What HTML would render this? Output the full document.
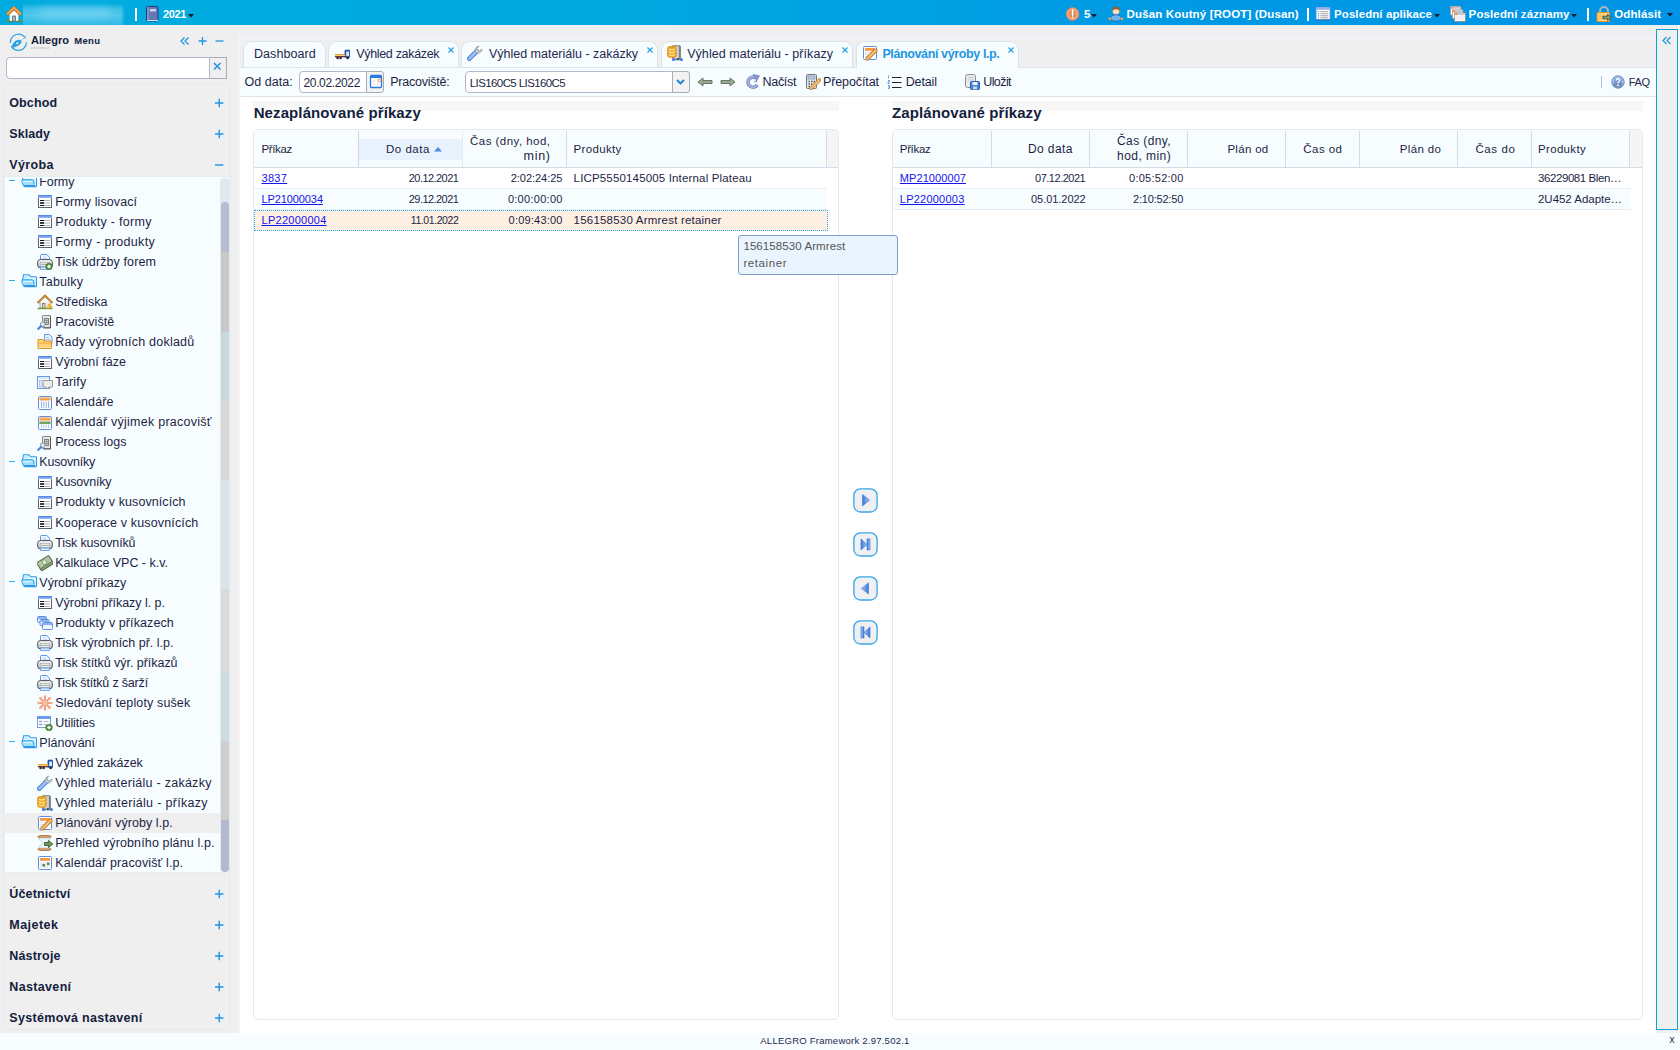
<!DOCTYPE html>
<html><head><meta charset="utf-8"><title>Allegro</title>
<style>
html,body{margin:0;padding:0;}
body{width:1680px;height:1050px;overflow:hidden;background:#efefef;font-family:"Liberation Sans",sans-serif;color:#1d1f45;position:relative;}
.b{position:absolute;box-sizing:border-box;}
.t{position:absolute;white-space:nowrap;line-height:1;}
.lk{color:#1414ec;text-decoration:underline;}
</style></head><body>
<svg width="0" height="0" style="position:absolute"><defs><linearGradient id="gp" x1="0" y1="0" x2="0" y2="1"><stop offset="0" stop-color="#fcfcfc"/><stop offset="1" stop-color="#b4b8be"/></linearGradient><linearGradient id="gb" x1="0" y1="0" x2="1" y2="0"><stop offset="0" stop-color="#3a78d8"/><stop offset="1" stop-color="#a8c8f4"/></linearGradient><linearGradient id="gbr" x1="1" y1="0" x2="0" y2="0"><stop offset="0" stop-color="#3a78d8"/><stop offset="1" stop-color="#a8c8f4"/></linearGradient><linearGradient id="gt" x1="0" y1="0" x2="0" y2="1"><stop offset="0" stop-color="#4a7ee0"/><stop offset="1" stop-color="#a4c2f6"/></linearGradient></defs></svg>

<div class="b" style="left:0px;top:0px;width:1680px;height:25px;background:linear-gradient(90deg,#00acdf 0%,#00a9e0 35%,#0099e4 70%,#0093e6 100%);"></div>
<svg class="b" style="left:6px;top:5.5px" width="16" height="16" viewBox="0 0 16 16"><path d="M3.600 8.200L8 4.200l4.400 4v6.900h-8.800z" fill="#fff"/>
<path d="M1 8.700L8 1.900l7 6.800" fill="none" stroke="#c8701c" stroke-width="3.400" stroke-linejoin="miter"/><path d="M1.200 8.300L8 1.700l6.800 6.600" fill="none" stroke="#f2a452" stroke-width="2.200" stroke-linejoin="miter"/>
<rect x="6.100" y="9.600" width="3.800" height="5.500" fill="#6e7670"/><rect x="7" y="10.600" width="2" height="4.500" fill="#b4b4bc"/>
<path d="M0.200 14.600h3.600M12.200 14.600h3.600" stroke="#8a9a38" stroke-width="1.600"/><path d="M0.200 15.300h15.600" stroke="#6a6a28" stroke-width=".700"/></svg>
<div class="b" style="left:0;top:0;width:240px;height:25px;overflow:hidden">
<div class="b" style="left:23px;top:0px;width:102px;height:25px;background:linear-gradient(180deg,rgba(120,212,242,0) 12%,rgba(120,212,242,.55) 38%,rgba(130,216,244,.62) 62%,rgba(100,204,238,.45) 100%);-webkit-mask-image:linear-gradient(90deg,#000 0,#000 96%,transparent 100%);"></div>
<div class="b" style="left:40px;top:8px;width:70px;height:10px;background:rgba(170,230,250,.35);filter:blur(4px);"></div>
</div>
<div class="b" style="left:135.3px;top:8px;width:1.8px;height:13px;background:#fff;"></div>
<svg class="b" style="left:143.5px;top:6px" width="16" height="16" viewBox="0 0 16 16"><rect x="2.500" y="0.500" width="11.500" height="14.500" rx="1" fill="#6478b8" stroke="#2c3a78" stroke-width="1"/><path d="M4 1v14" stroke="#93a6dc" stroke-width="1.200"/>
<rect x="6" y="3" width="6" height="2.500" fill="#c9d4f4"/><path d="M3 14.500h11" stroke="#d8def0" stroke-width="1"/></svg>
<div class="t" style="left:163px;top:9px;font-size:11.0px;font-weight:700;color:#fff;letter-spacing:-0.36px;">2021</div>
<svg class="b" style="left:188px;top:14px" width="6" height="3.500"><path d="M0 0h6L3 3.500z" fill="#10202c"/></svg>
<svg class="b" style="left:1064px;top:6px" width="16" height="16" viewBox="0 0 16 16"><circle cx="8.600" cy="8" r="6.300" fill="#f29a6c" stroke="#e8825a" stroke-width="1"/><circle cx="8.600" cy="8" r="5" fill="none" stroke="#f8c0a0" stroke-width=".800" stroke-dasharray="1.200 .800"/>
<rect x="6.300" y="3.500" width="4.600" height="9" rx="2" fill="#c87a48" opacity=".75"/>
<path d="M8.600 4v5" stroke="#fff" stroke-width="1.800" stroke-linecap="round"/><circle cx="8.600" cy="11.600" r="1.100" fill="#fff"/></svg>
<div class="t" style="left:1084px;top:9px;font-size:11.5px;font-weight:700;color:#fff;">5</div>
<svg class="b" style="left:1091px;top:14px" width="6" height="3.500"><path d="M0 0h6L3 3.500z" fill="#10202c"/></svg>
<svg class="b" style="left:1108px;top:6px" width="16" height="16" viewBox="0 0 16 16"><circle cx="8" cy="5.300" r="3.300" fill="#fbe3c4" stroke="#d8a060" stroke-width=".500"/><path d="M4.300 5.200c-.3-3.200 1.700-4.400 3.700-4.400s4 1.200 3.700 4.400c-1-1.300-2.300-1.900-3.700-1.900s-2.700.6-3.700 1.900z" fill="#a85a24"/>
<path d="M2.500 12.500c.3-2.600 2.400-3.800 5.500-3.800s5.200 1.200 5.500 3.800c-.8 1.800-3 2.600-5.500 2.600s-4.700-.8-5.500-2.600z" fill="#6ab4f0" stroke="#2c52b8" stroke-width=".700"/>
<circle cx="1.900" cy="12.800" r="1.400" fill="#f0a040"/><circle cx="14.100" cy="12.800" r="1.400" fill="#f0a040"/></svg>
<div class="t" style="left:1126.6px;top:9px;font-size:11.5px;font-weight:700;color:#fff;letter-spacing:0.15px;">Dušan Koutný [ROOT] (Dusan)</div>
<div class="b" style="left:1307px;top:8px;width:1.7px;height:13px;background:#fff;"></div>
<svg class="b" style="left:1315px;top:6px" width="16" height="16" viewBox="0 0 16 16"><rect x="1.200" y="1.500" width="13.800" height="12" rx=".800" fill="#fff" stroke="#8a9cd8" stroke-width=".800"/><rect x="1.200" y="1.500" width="13.800" height="2.300" fill="#9cb0e8"/>
<path d="M3 5.700h1.200M3 7.800h1.200M3 9.800h1.200M3 11.800h1.200" stroke="#4a90e8" stroke-width="1"/><path d="M5.300 5.700h8M5.300 7.800h8M5.300 9.800h8M5.300 11.800h8" stroke="#9a9a9a" stroke-width=".900"/><path d="M1.500 13.800h13.500" stroke="#5a68a0" stroke-width=".800"/></svg>
<div class="t" style="left:1334px;top:9px;font-size:11.5px;font-weight:700;color:#fff;letter-spacing:0.09px;">Poslední aplikace</div>
<svg class="b" style="left:1433.5px;top:14px" width="6" height="3.500"><path d="M0 0h6L3 3.500z" fill="#10202c"/></svg>
<svg class="b" style="left:1450px;top:6px" width="16" height="16" viewBox="0 0 16 16"><rect x="0.400" y="0.400" width="10.400" height="8.600" fill="#fcfcfc" stroke="#a89888" stroke-width=".700"/><rect x="0.800" y="0.800" width="9.600" height="1.900" fill="#c4c4d8"/><rect x="1" y="0.900" width="2" height="1.700" fill="#f08838"/>
<rect x="2.500" y="3.800" width="10.400" height="8.600" fill="#fcfcfc" stroke="#a89888" stroke-width=".700"/><rect x="2.900" y="4.200" width="9.600" height="1.900" fill="#c4c4d8"/><rect x="3.100" y="4.300" width="2" height="1.700" fill="#f08838"/>
<rect x="4.600" y="6.800" width="10.800" height="8.600" fill="#fdfdfd" stroke="#a08878" stroke-width=".700"/><rect x="5" y="7.200" width="10" height="1.900" fill="#c4c4d8"/><rect x="5.200" y="7.300" width="2" height="1.700" fill="#f08838"/><rect x="5.400" y="10" width="9.200" height="4.600" fill="#f0f0f6"/></svg>
<div class="t" style="left:1468.6px;top:9px;font-size:11.5px;font-weight:700;color:#fff;letter-spacing:0.12px;">Poslední záznamy</div>
<svg class="b" style="left:1571px;top:14px" width="6" height="3.500"><path d="M0 0h6L3 3.500z" fill="#10202c"/></svg>
<div class="b" style="left:1587.2px;top:8px;width:1.7px;height:13px;background:#fff;"></div>
<svg class="b" style="left:1596px;top:6px" width="16" height="16" viewBox="0 0 16 16"><path d="M4 7V5a4 4 0 0 1 8 0v2" fill="none" stroke="#b0b4ba" stroke-width="2"/><rect x="1" y="6.500" width="12.500" height="9" rx="1" fill="#fbd88c" stroke="#e09020" stroke-width="1.200"/>
<path d="M2.500 9h5M2.500 11h5M2.500 13h5" stroke="#e8a848" stroke-width=".900"/>
<path d="M7 10.200h4.500v-1.800l4 3.100-4 3.100v-1.800h-4.500z" fill="#8aa07a" stroke="#3c5032" stroke-width=".900"/></svg>
<div class="t" style="left:1614.3px;top:9px;font-size:11.5px;font-weight:700;color:#fff;letter-spacing:0.1px;">Odhlásit</div>
<svg class="b" style="left:1666.7px;top:13.2px" width="6" height="3.500"><path d="M0 0h6L3 3.500z" fill="#10202c"/></svg>
<svg class="b" style="left:9px;top:33px" width="19" height="19" viewBox="0 0 19 19"><circle cx="9.400" cy="9.300" r="8.100" fill="none" stroke="#2aa4e8" stroke-width="1.200" stroke-dasharray="21 3.500 22 4.400"/><path d="M2 13.600C3.400 12.600 3.600 10.800 4.800 9.400 6.100 7.700 8.600 6.700 10.800 6.900c1.700.2 2.200 1.500 1.500 2.800-1 2-2.900 3.100-5 3.700-1.700.5-3.100 2.100-5.300.2z" fill="#29a3e6"/><ellipse cx="8.300" cy="10.300" rx="1.300" ry=".800" transform="rotate(-25 8.300 10.300)" fill="#efefef"/><path d="M11.600 8L17.300 2.700" stroke="#7fcdf2" stroke-width="1"/></svg>
<div class="t" style="left:31px;top:35px;font-size:11px;font-weight:700;color:#14213d;letter-spacing:0.02px;">Allegro</div>
<div class="t" style="left:74.3px;top:36px;font-size:9.5px;font-weight:700;color:#14213d;letter-spacing:0.3px;">Menu</div>
<div class="b" style="left:31px;top:46.8px;width:18px;height:2px;background:repeating-linear-gradient(90deg,#d0d3d8 0 1.500px,#e6e7ea 1.500px 2.300px);"></div>
<svg class="b" style="left:179px;top:35px" width="50" height="12"><g stroke="#1d96e0" stroke-width="1.300" fill="none"><path d="M5.500 2.500L2 6l3.500 3.500M9.500 2.500L6 6l3.500 3.500"/><path d="M19.500 6h8M23.500 2v8"/><path d="M36.500 6h8"/></g></svg>
<div class="b" style="left:6px;top:57px;width:204px;height:22px;background:#fff;border:1px solid #b4b6cc;border-radius:4px 0 0 4px;"></div>
<div class="b" style="left:209px;top:57px;width:18px;height:22px;background:#efefef;border:1px solid #a9adb8;border-left:1px solid #b4b6cc;"></div>
<svg class="b" style="left:213.200px;top:62.200px" width="9" height="9"><path d="M1 1l6.500 6.500M7.500 1l-6.500 6.500" stroke="#1d94e2" stroke-width="1.500" fill="none"/></svg>
<div class="b" style="left:3px;top:83px;width:227px;height:947px;border:1px solid #dfeaf0;border-radius:5px;background:#efefef;"></div>
<div class="t" style="left:9.3px;top:97px;font-size:12.5px;font-weight:700;color:#14213d;letter-spacing:0.1px;">Obchod</div>
<svg class="b" style="left:214.300px;top:97.7px" width="10" height="10"><path d="M1 5h8.400M5.200 0.800v8.400" stroke="#1d94e2" stroke-width="1.400"/></svg>
<div class="t" style="left:9.3px;top:128px;font-size:12.5px;font-weight:700;color:#14213d;letter-spacing:0.08px;">Sklady</div>
<svg class="b" style="left:214.300px;top:128.7px" width="10" height="10"><path d="M1 5h8.400M5.200 0.800v8.400" stroke="#1d94e2" stroke-width="1.400"/></svg>
<div class="t" style="left:9.3px;top:159px;font-size:12.5px;font-weight:700;color:#14213d;letter-spacing:0.36px;">Výroba</div>
<svg class="b" style="left:214.300px;top:159.7px" width="10" height="10"><path d="M1 5h8.400" stroke="#1d94e2" stroke-width="1.400"/></svg>
<div class="t" style="left:9.3px;top:888px;font-size:12.5px;font-weight:700;color:#14213d;letter-spacing:0.14px;">Účetnictví</div>
<svg class="b" style="left:214.300px;top:888.7px" width="10" height="10"><path d="M1 5h8.400M5.200 0.800v8.400" stroke="#1d94e2" stroke-width="1.400"/></svg>
<div class="t" style="left:9.3px;top:919px;font-size:12.5px;font-weight:700;color:#14213d;letter-spacing:0.46px;">Majetek</div>
<svg class="b" style="left:214.300px;top:919.7px" width="10" height="10"><path d="M1 5h8.400M5.200 0.800v8.400" stroke="#1d94e2" stroke-width="1.400"/></svg>
<div class="t" style="left:9.3px;top:950px;font-size:12.5px;font-weight:700;color:#14213d;letter-spacing:0.17px;">Nástroje</div>
<svg class="b" style="left:214.300px;top:950.7px" width="10" height="10"><path d="M1 5h8.400M5.200 0.800v8.400" stroke="#1d94e2" stroke-width="1.400"/></svg>
<div class="t" style="left:9.3px;top:981px;font-size:12.5px;font-weight:700;color:#14213d;letter-spacing:0.34px;">Nastavení</div>
<svg class="b" style="left:214.300px;top:981.7px" width="10" height="10"><path d="M1 5h8.400M5.200 0.800v8.400" stroke="#1d94e2" stroke-width="1.400"/></svg>
<div class="t" style="left:9.3px;top:1012px;font-size:12.5px;font-weight:700;color:#14213d;letter-spacing:0.32px;">Systémová nastavení</div>
<svg class="b" style="left:214.300px;top:1012.7px" width="10" height="10"><path d="M1 5h8.400M5.200 0.800v8.400" stroke="#1d94e2" stroke-width="1.400"/></svg>
<div class="b" style="left:5px;top:176px;width:224px;height:697px;background:#f7fdff;border-top:1px solid #e3edf2;border-bottom:1px solid #e3edf2;border-radius:2px;"></div>
<div class="b" style="left:5px;top:178px;width:216px;height:694px;overflow:hidden;">
<div class="b" style="left:4px;top:2.2px;width:5.5px;height:1.2px;background:#35b0e6;"></div>
<svg class="b" style="left:16px;top:-5.5px" width="16" height="16" viewBox="0 0 16 16"><g transform="translate(0 1)"><path d="M2.600 0.800h5.300l1.900 2h5q.700 0 .700.700v8.300q0 .900-.900.900h-10.600q-.800 0-1.200-.700l-1.600-3.400q-.500-1.100.100-2.100z" fill="#e4f5ff" stroke="#2a9bec" stroke-width="1.100"/>
<path d="M0.900 6.800q.300-1 1.500-1h8.200q1.900 0 2.200 1.900l.300 3.300h-10l-2-3.200z" fill="#a4defc"/><path d="M0.900 6.800q.300-1 1.500-1h8.200q1.900 0 2.200 1.900l.300 2.800" fill="none" stroke="#1fa6ea" stroke-width="1.100"/>
<path d="M2.500 7.600h9" stroke="#e0f6ff" stroke-width="1"/><path d="M2.800 3.200h4.500" stroke="#a8e0fc" stroke-width="1"/>
<path d="M3.200 11.900h11" stroke="#1e90e4" stroke-width="1.700"/></g></svg>
<div class="t" style="left:34.3px;top:-2px;font-size:12.5px;letter-spacing:-0.06px;">Formy</div>
<svg class="b" style="left:32px;top:16.0px" width="16" height="16" viewBox="0 0 16 16"><rect x="1.500" y="1.500" width="13" height="12" fill="#fff" stroke="#5a6270" stroke-width="1"/>
<rect x="1" y="1" width="14" height="3" fill="url(#gt)"/>
<path d="M3 6.500h4M3 11.500h4" stroke="#111" stroke-width="1"/><path d="M3 9h4" stroke="#000" stroke-width="1.500"/>
<path d="M7 6.500h6M7 9h6M7 11.500h6" stroke="#a8a8a8" stroke-width=".9"/></svg>
<div class="t" style="left:50.3px;top:18px;font-size:12.5px;letter-spacing:0.09px;">Formy lisovací</div>
<svg class="b" style="left:32px;top:36.0px" width="16" height="16" viewBox="0 0 16 16"><rect x="1.500" y="1.500" width="13" height="12" fill="#fff" stroke="#5a6270" stroke-width="1"/>
<rect x="1" y="1" width="14" height="3" fill="url(#gt)"/>
<path d="M3 6.500h4M3 11.500h4" stroke="#111" stroke-width="1"/><path d="M3 9h4" stroke="#000" stroke-width="1.500"/>
<path d="M7 6.500h6M7 9h6M7 11.500h6" stroke="#a8a8a8" stroke-width=".9"/></svg>
<div class="t" style="left:50.3px;top:38px;font-size:12.5px;letter-spacing:0.3px;">Produkty - formy</div>
<svg class="b" style="left:32px;top:56.0px" width="16" height="16" viewBox="0 0 16 16"><rect x="1.500" y="1.500" width="13" height="12" fill="#fff" stroke="#5a6270" stroke-width="1"/>
<rect x="1" y="1" width="14" height="3" fill="url(#gt)"/>
<path d="M3 6.500h4M3 11.500h4" stroke="#111" stroke-width="1"/><path d="M3 9h4" stroke="#000" stroke-width="1.500"/>
<path d="M7 6.500h6M7 9h6M7 11.500h6" stroke="#a8a8a8" stroke-width=".9"/></svg>
<div class="t" style="left:50.3px;top:58px;font-size:12.5px;letter-spacing:0.33px;">Formy - produkty</div>
<svg class="b" style="left:32px;top:76.0px" width="16" height="16" viewBox="0 0 16 16"><path d="M3.500 6.500V1.500q0-1 1-1h5.300l2.700 2.700v3.300" fill="#eef6ff" stroke="#5a94e6" stroke-width="1"/><path d="M6 3h3M6 4.700h4.500" stroke="#b4d0f4" stroke-width=".800"/>
<rect x="0.700" y="5.600" width="14.600" height="8.200" rx="2.600" fill="url(#gp)" stroke="#4a4e56" stroke-width="1"/>
<rect x="3.200" y="8.400" width="9.600" height="3.800" fill="#fff" stroke="#8a8e96" stroke-width=".500"/><rect x="3.500" y="9.700" width="9" height="1.400" fill="#a8b2a2"/>
<rect x="3.500" y="13" width="9" height="2.600" rx=".500" fill="#dcebff" stroke="#5a94e6" stroke-width=".900"/><circle cx="12" cy="12.500" r="3.300" fill="#4b8f3a" stroke="#356e28" stroke-width=".6"/><path d="M12 10.700v3.600M10.200 12.500h3.600" stroke="#fff" stroke-width="1.300"/></svg>
<div class="t" style="left:50.3px;top:78px;font-size:12.5px;letter-spacing:0.11px;">Tisk údržby forem</div>
<div class="b" style="left:4px;top:102.2px;width:5.5px;height:1.2px;background:#35b0e6;"></div>
<svg class="b" style="left:16px;top:94.5px" width="16" height="16" viewBox="0 0 16 16"><g transform="translate(0 1)"><path d="M2.600 0.800h5.300l1.900 2h5q.700 0 .700.700v8.300q0 .900-.900.900h-10.600q-.800 0-1.200-.700l-1.600-3.400q-.500-1.100.100-2.100z" fill="#e4f5ff" stroke="#2a9bec" stroke-width="1.100"/>
<path d="M0.900 6.800q.300-1 1.500-1h8.200q1.900 0 2.200 1.900l.300 3.300h-10l-2-3.200z" fill="#a4defc"/><path d="M0.900 6.800q.300-1 1.500-1h8.200q1.900 0 2.200 1.900l.300 2.800" fill="none" stroke="#1fa6ea" stroke-width="1.100"/>
<path d="M2.500 7.600h9" stroke="#e0f6ff" stroke-width="1"/><path d="M2.800 3.200h4.500" stroke="#a8e0fc" stroke-width="1"/>
<path d="M3.200 11.900h11" stroke="#1e90e4" stroke-width="1.700"/></g></svg>
<div class="t" style="left:34.3px;top:98px;font-size:12.5px;letter-spacing:0.22px;">Tabulky</div>
<svg class="b" style="left:32px;top:116.0px" width="16" height="16" viewBox="0 0 16 16"><path d="M3 8.500v5.500h10v-5.500" fill="#f2efe6" stroke="#9a927c" stroke-width=".8"/>
<path d="M0.500 9L8 1.800 15.500 9" fill="none" stroke="#b5762c" stroke-width="2.200" stroke-linejoin="miter"/>
<path d="M1.500 8.300L8 2.300l6.500 6" fill="none" stroke="#e0a458" stroke-width=".8"/>
<rect x="5" y="9" width="3.400" height="5" fill="#6e7a86"/><rect x="5.800" y="10" width="1.800" height="4" fill="#cfd6dc"/>
<path d="M0.500 14.500h15" stroke="#6a9a3a" stroke-width="1.400"/>
<circle cx="12.300" cy="11.200" r="1.800" fill="#f5b43c"/><circle cx="10.800" cy="13" r="1.500" fill="#f5c35a"/><circle cx="13.800" cy="13" r="1.500" fill="#f0a830"/></svg>
<div class="t" style="left:50.3px;top:118px;font-size:12.5px;">Střediska</div>
<svg class="b" style="left:32px;top:136.0px" width="16" height="16" viewBox="0 0 16 16"><path d="M5.500 1.500h8v12h-8z" fill="#e6e6e6" stroke="#8a8a8a" stroke-width="1"/><path d="M4.500 3l2.500-2" stroke="#aaa" stroke-width="1"/>
<rect x="7.500" y="4.500" width="4" height="6" fill="#c4c4c4" stroke="#6e6e6e" stroke-width=".8"/><path d="M8.500 6.500h2M8.500 8.500h2" stroke="#666" stroke-width=".8"/>
<path d="M13.500 2.500v11.500h-7" fill="none" stroke="#555" stroke-width="1"/>
<circle cx="5.700" cy="10.300" r="2.300" fill="#dfeeff" stroke="#8a93a2" stroke-width="1"/>
<path d="M4 12.200L1.300 14.800" stroke="#3f82e0" stroke-width="2.200" stroke-linecap="round"/></svg>
<div class="t" style="left:50.3px;top:138px;font-size:12.5px;letter-spacing:0.07px;">Pracoviště</div>
<svg class="b" style="left:32px;top:156.0px" width="16" height="16" viewBox="0 0 16 16"><path d="M7.500 0.500h5l2.500 2.500v6.500h-7.500z" fill="#e4f0fe" stroke="#6a9be0" stroke-width="1"/><path d="M9 3.500h3M9 5.500h4" stroke="#9bbcec" stroke-width=".8"/>
<path d="M1 5.500h5l1 1.500h7.500v7.500h-13.500z" fill="#fbd27a" stroke="#dc9628" stroke-width="1"/>
<path d="M1.500 9h13" stroke="#f0a838" stroke-width="1"/><path d="M1.500 13.500h13" stroke="#fbe3a8" stroke-width="1"/></svg>
<div class="t" style="left:50.3px;top:158px;font-size:12.5px;letter-spacing:0.23px;">Řady výrobních dokladů</div>
<svg class="b" style="left:32px;top:176.5px" width="16" height="16" viewBox="0 0 16 16"><rect x="1.500" y="1.500" width="13" height="12" fill="#fff" stroke="#5a6270" stroke-width="1"/>
<rect x="1" y="1" width="14" height="3" fill="url(#gt)"/>
<path d="M3 6.500h4M3 11.500h4" stroke="#111" stroke-width="1"/><path d="M3 9h4" stroke="#000" stroke-width="1.500"/>
<path d="M7 6.500h6M7 9h6M7 11.500h6" stroke="#a8a8a8" stroke-width=".9"/></svg>
<div class="t" style="left:50.3px;top:178px;font-size:12.5px;letter-spacing:0.04px;">Výrobní fáze</div>
<svg class="b" style="left:32px;top:196.5px" width="16" height="16" viewBox="0 0 16 16"><rect x="0.500" y="1.500" width="12" height="12" fill="#f4f8fe" stroke="#6a9be0" stroke-width="1"/><rect x="1" y="2" width="11" height="2" fill="#dce9fb"/>
<rect x="2.500" y="5.500" width="2.500" height="6.500" fill="#dfeafc" stroke="#9bbcec" stroke-width=".7"/>
<path d="M6 5.500h9.500v6.500h-3.500l-1.500 2-1.500-2h-3z" fill="#ececec" stroke="#9a9a9a" stroke-width="1"/></svg>
<div class="t" style="left:50.3px;top:198px;font-size:12.5px;letter-spacing:0.21px;">Tarify</div>
<svg class="b" style="left:32px;top:216.5px" width="16" height="16" viewBox="0 0 16 16"><rect x="1.500" y="1.500" width="13" height="13" rx="1" fill="#fff" stroke="#5c8fe0" stroke-width="1"/>
<rect x="2.500" y="2.500" width="11" height="3" fill="#f59a40"/><rect x="2.500" y="2.500" width="11" height="1" fill="#fbc48a"/>
<path d="M4.500 6.500v6.500M6.800 6.500v6.500M9.200 6.500v6.500M11.500 6.500v6.500" stroke="#8fb0e8" stroke-width="1"/></svg>
<div class="t" style="left:50.3px;top:218px;font-size:12.5px;letter-spacing:0.16px;">Kalendáře</div>
<svg class="b" style="left:32px;top:236.5px" width="16" height="16" viewBox="0 0 16 16"><rect x="1.500" y="1.500" width="13" height="13" rx="1" fill="#fff" stroke="#5c8fe0" stroke-width="1"/>
<rect x="2.500" y="2.500" width="11" height="3" fill="#f59a40"/><rect x="2.500" y="2.500" width="11" height="1" fill="#fbc48a"/>
<rect x="2.500" y="6.500" width="11" height="2.500" fill="#6a9a52"/>
<path d="M4.500 9.500v3.500M6.800 9.500v3.500M9.200 9.500v3.500M11.500 9.500v3.500" stroke="#b8c8e4" stroke-width="1"/><path d="M3 8h10" stroke="#a0c088" stroke-width=".8" stroke-dasharray="1.300 1"/></svg>
<div class="t" style="left:50.3px;top:238px;font-size:12.5px;letter-spacing:0.25px;">Kalendář výjimek pracovišť</div>
<svg class="b" style="left:32px;top:256.5px" width="16" height="16" viewBox="0 0 16 16"><path d="M5.500 1.500h8v12h-8z" fill="#e6e6e6" stroke="#8a8a8a" stroke-width="1"/><path d="M4.500 3l2.500-2" stroke="#aaa" stroke-width="1"/>
<rect x="7.500" y="4.500" width="4" height="6" fill="#c4c4c4" stroke="#6e6e6e" stroke-width=".8"/><path d="M8.500 6.500h2M8.500 8.500h2" stroke="#666" stroke-width=".8"/>
<path d="M13.500 2.500v11.500h-7" fill="none" stroke="#555" stroke-width="1"/>
<circle cx="5.700" cy="10.300" r="2.300" fill="#dfeeff" stroke="#8a93a2" stroke-width="1"/>
<path d="M4 12.200L1.300 14.800" stroke="#3f82e0" stroke-width="2.200" stroke-linecap="round"/></svg>
<div class="t" style="left:50.3px;top:258px;font-size:12.5px;letter-spacing:-0.04px;">Process logs</div>
<div class="b" style="left:4px;top:282.7px;width:5.5px;height:1.2px;background:#35b0e6;"></div>
<svg class="b" style="left:16px;top:275.0px" width="16" height="16" viewBox="0 0 16 16"><g transform="translate(0 1)"><path d="M2.600 0.800h5.300l1.900 2h5q.700 0 .700.700v8.300q0 .900-.900.900h-10.600q-.800 0-1.200-.700l-1.600-3.400q-.500-1.100.100-2.100z" fill="#e4f5ff" stroke="#2a9bec" stroke-width="1.100"/>
<path d="M0.900 6.800q.300-1 1.500-1h8.200q1.900 0 2.200 1.900l.300 3.300h-10l-2-3.200z" fill="#a4defc"/><path d="M0.900 6.800q.300-1 1.500-1h8.200q1.900 0 2.200 1.900l.300 2.800" fill="none" stroke="#1fa6ea" stroke-width="1.100"/>
<path d="M2.500 7.600h9" stroke="#e0f6ff" stroke-width="1"/><path d="M2.800 3.200h4.500" stroke="#a8e0fc" stroke-width="1"/>
<path d="M3.200 11.900h11" stroke="#1e90e4" stroke-width="1.700"/></g></svg>
<div class="t" style="left:34.3px;top:278px;font-size:12.5px;letter-spacing:-0.21px;">Kusovníky</div>
<svg class="b" style="left:32px;top:296.5px" width="16" height="16" viewBox="0 0 16 16"><rect x="1.500" y="1.500" width="13" height="12" fill="#fff" stroke="#5a6270" stroke-width="1"/>
<rect x="1" y="1" width="14" height="3" fill="url(#gt)"/>
<path d="M3 6.500h4M3 11.500h4" stroke="#111" stroke-width="1"/><path d="M3 9h4" stroke="#000" stroke-width="1.500"/>
<path d="M7 6.500h6M7 9h6M7 11.500h6" stroke="#a8a8a8" stroke-width=".9"/></svg>
<div class="t" style="left:50.3px;top:298px;font-size:12.5px;letter-spacing:-0.18px;">Kusovníky</div>
<svg class="b" style="left:32px;top:316.5px" width="16" height="16" viewBox="0 0 16 16"><rect x="1.500" y="1.500" width="13" height="12" fill="#fff" stroke="#5a6270" stroke-width="1"/>
<rect x="1" y="1" width="14" height="3" fill="url(#gt)"/>
<path d="M3 6.500h4M3 11.500h4" stroke="#111" stroke-width="1"/><path d="M3 9h4" stroke="#000" stroke-width="1.500"/>
<path d="M7 6.500h6M7 9h6M7 11.500h6" stroke="#a8a8a8" stroke-width=".9"/></svg>
<div class="t" style="left:50.3px;top:318px;font-size:12.5px;letter-spacing:0.08px;">Produkty v kusovnících</div>
<svg class="b" style="left:32px;top:336.5px" width="16" height="16" viewBox="0 0 16 16"><rect x="1.500" y="1.500" width="13" height="12" fill="#fff" stroke="#5a6270" stroke-width="1"/>
<rect x="1" y="1" width="14" height="3" fill="url(#gt)"/>
<path d="M3 6.500h4M3 11.500h4" stroke="#111" stroke-width="1"/><path d="M3 9h4" stroke="#000" stroke-width="1.500"/>
<path d="M7 6.500h6M7 9h6M7 11.500h6" stroke="#a8a8a8" stroke-width=".9"/></svg>
<div class="t" style="left:50.3px;top:339px;font-size:12.5px;letter-spacing:0.15px;">Kooperace v kusovnících</div>
<svg class="b" style="left:32px;top:356.5px" width="16" height="16" viewBox="0 0 16 16"><path d="M3.500 6.500V1.500q0-1 1-1h5.300l2.700 2.700v3.300" fill="#eef6ff" stroke="#5a94e6" stroke-width="1"/><path d="M6 3h3M6 4.700h4.500" stroke="#b4d0f4" stroke-width=".800"/>
<rect x="0.700" y="5.600" width="14.600" height="8.200" rx="2.600" fill="url(#gp)" stroke="#4a4e56" stroke-width="1"/>
<rect x="3.200" y="8.400" width="9.600" height="3.800" fill="#fff" stroke="#8a8e96" stroke-width=".500"/><rect x="3.500" y="9.700" width="9" height="1.400" fill="#a8b2a2"/>
<rect x="3.500" y="13" width="9" height="2.600" rx=".500" fill="#dcebff" stroke="#5a94e6" stroke-width=".900"/></svg>
<div class="t" style="left:50.3px;top:359px;font-size:12.5px;letter-spacing:-0.15px;">Tisk kusovníků</div>
<svg class="b" style="left:32px;top:376.5px" width="16" height="16" viewBox="0 0 16 16"><g transform="rotate(-32 8 8)"><rect x="1" y="6" width="14" height="7" fill="#8aa47a" stroke="#4e6a44" stroke-width="1"/>
<rect x="1" y="3.500" width="14" height="7" fill="#b4c8a6" stroke="#5a7650" stroke-width="1"/><ellipse cx="8" cy="7" rx="2.200" ry="2.500" fill="#dfe9d8" stroke="#6a8660" stroke-width=".7"/></g></svg>
<div class="t" style="left:50.3px;top:379px;font-size:12.5px;letter-spacing:-0.02px;">Kalkulace VPC - k.v.</div>
<div class="b" style="left:4px;top:402.7px;width:5.5px;height:1.2px;background:#35b0e6;"></div>
<svg class="b" style="left:16px;top:395.0px" width="16" height="16" viewBox="0 0 16 16"><g transform="translate(0 1)"><path d="M2.600 0.800h5.300l1.900 2h5q.700 0 .700.700v8.300q0 .900-.900.900h-10.600q-.800 0-1.200-.700l-1.600-3.400q-.500-1.100.100-2.100z" fill="#e4f5ff" stroke="#2a9bec" stroke-width="1.100"/>
<path d="M0.900 6.800q.300-1 1.500-1h8.200q1.900 0 2.200 1.900l.300 3.300h-10l-2-3.200z" fill="#a4defc"/><path d="M0.900 6.800q.300-1 1.500-1h8.200q1.900 0 2.200 1.900l.300 2.800" fill="none" stroke="#1fa6ea" stroke-width="1.100"/>
<path d="M2.500 7.600h9" stroke="#e0f6ff" stroke-width="1"/><path d="M2.800 3.200h4.500" stroke="#a8e0fc" stroke-width="1"/>
<path d="M3.200 11.900h11" stroke="#1e90e4" stroke-width="1.700"/></g></svg>
<div class="t" style="left:34.3px;top:399px;font-size:12.5px;">Výrobní příkazy</div>
<svg class="b" style="left:32px;top:416.5px" width="16" height="16" viewBox="0 0 16 16"><rect x="1.500" y="1.500" width="13" height="12" fill="#fff" stroke="#5a6270" stroke-width="1"/>
<rect x="1" y="1" width="14" height="3" fill="url(#gt)"/>
<path d="M3 6.500h4M3 11.500h4" stroke="#111" stroke-width="1"/><path d="M3 9h4" stroke="#000" stroke-width="1.500"/>
<path d="M7 6.500h6M7 9h6M7 11.500h6" stroke="#a8a8a8" stroke-width=".9"/></svg>
<div class="t" style="left:50.3px;top:419px;font-size:12.5px;letter-spacing:-0.04px;">Výrobní příkazy l. p.</div>
<svg class="b" style="left:32px;top:436.5px" width="16" height="16" viewBox="0 0 16 16"><rect x="0.500" y="1.500" width="9" height="6" rx="1" fill="#eaf2fe" stroke="#5c8fe0" stroke-width="1"/><rect x="1" y="2" width="8" height="2" fill="#8db4f0"/>
<rect x="3" y="4.500" width="9" height="6" rx="1" fill="#eaf2fe" stroke="#5c8fe0" stroke-width="1"/><rect x="3.500" y="5" width="8" height="2" fill="#8db4f0"/>
<rect x="5.500" y="7.500" width="10" height="7" rx="1" fill="#f4f8ff" stroke="#5c8fe0" stroke-width="1"/><rect x="6" y="8" width="9" height="2.200" fill="#8db4f0"/></svg>
<div class="t" style="left:50.3px;top:439px;font-size:12.5px;letter-spacing:0.09px;">Produkty v příkazech</div>
<svg class="b" style="left:32px;top:456.5px" width="16" height="16" viewBox="0 0 16 16"><path d="M3.500 6.500V1.500q0-1 1-1h5.300l2.700 2.700v3.300" fill="#eef6ff" stroke="#5a94e6" stroke-width="1"/><path d="M6 3h3M6 4.700h4.500" stroke="#b4d0f4" stroke-width=".800"/>
<rect x="0.700" y="5.600" width="14.600" height="8.200" rx="2.600" fill="url(#gp)" stroke="#4a4e56" stroke-width="1"/>
<rect x="3.200" y="8.400" width="9.600" height="3.800" fill="#fff" stroke="#8a8e96" stroke-width=".500"/><rect x="3.500" y="9.700" width="9" height="1.400" fill="#a8b2a2"/>
<rect x="3.500" y="13" width="9" height="2.600" rx=".500" fill="#dcebff" stroke="#5a94e6" stroke-width=".900"/></svg>
<div class="t" style="left:50.3px;top:459px;font-size:12.5px;letter-spacing:-0.01px;">Tisk výrobních př. l.p.</div>
<svg class="b" style="left:32px;top:476.5px" width="16" height="16" viewBox="0 0 16 16"><path d="M3.500 6.500V1.500q0-1 1-1h5.300l2.700 2.700v3.300" fill="#eef6ff" stroke="#5a94e6" stroke-width="1"/><path d="M6 3h3M6 4.700h4.500" stroke="#b4d0f4" stroke-width=".800"/>
<rect x="0.700" y="5.600" width="14.600" height="8.200" rx="2.600" fill="url(#gp)" stroke="#4a4e56" stroke-width="1"/>
<rect x="3.200" y="8.400" width="9.600" height="3.800" fill="#fff" stroke="#8a8e96" stroke-width=".500"/><rect x="3.500" y="9.700" width="9" height="1.400" fill="#a8b2a2"/>
<rect x="3.500" y="13" width="9" height="2.600" rx=".500" fill="#dcebff" stroke="#5a94e6" stroke-width=".900"/></svg>
<div class="t" style="left:50.3px;top:479px;font-size:12.5px;letter-spacing:-0.04px;">Tisk štítků výr. příkazů</div>
<svg class="b" style="left:32px;top:497.0px" width="16" height="16" viewBox="0 0 16 16"><path d="M3.500 6.500V1.500q0-1 1-1h5.300l2.700 2.700v3.300" fill="#eef6ff" stroke="#5a94e6" stroke-width="1"/><path d="M6 3h3M6 4.700h4.500" stroke="#b4d0f4" stroke-width=".800"/>
<rect x="0.700" y="5.600" width="14.600" height="8.200" rx="2.600" fill="url(#gp)" stroke="#4a4e56" stroke-width="1"/>
<rect x="3.200" y="8.400" width="9.600" height="3.800" fill="#fff" stroke="#8a8e96" stroke-width=".500"/><rect x="3.500" y="9.700" width="9" height="1.400" fill="#a8b2a2"/>
<rect x="3.500" y="13" width="9" height="2.600" rx=".500" fill="#dcebff" stroke="#5a94e6" stroke-width=".900"/></svg>
<div class="t" style="left:50.3px;top:499px;font-size:12.5px;letter-spacing:-0.18px;">Tisk štítků z šarží</div>
<svg class="b" style="left:32px;top:517.0px" width="16" height="16" viewBox="0 0 16 16"><g stroke="#f59a78" stroke-width="2" stroke-linecap="round"><path d="M8 1.500v13M1.500 8h13M3.300 3.300l9.400 9.400M12.700 3.300l-9.400 9.400"/></g>
<g fill="#f8a888"><circle cx="8" cy="1.800" r="1.300"/><circle cx="8" cy="14.200" r="1.300"/><circle cx="1.800" cy="8" r="1.300"/><circle cx="14.200" cy="8" r="1.300"/><circle cx="3.400" cy="3.400" r="1.300"/><circle cx="12.600" cy="3.400" r="1.300"/><circle cx="3.400" cy="12.600" r="1.300"/><circle cx="12.600" cy="12.600" r="1.300"/></g><circle cx="8" cy="8" r="2.600" fill="#ecc4a0"/></svg>
<div class="t" style="left:50.3px;top:519px;font-size:12.5px;letter-spacing:0.13px;">Sledování teploty sušek</div>
<svg class="b" style="left:32px;top:537.0px" width="16" height="16" viewBox="0 0 16 16"><rect x="0.500" y="1.500" width="13" height="11" fill="#fff" stroke="#7a9cd0" stroke-width="1"/>
<rect x="0" y="1" width="14" height="3" fill="#6c9be8"/>
<path d="M2 6.500h3M2 9.500h3" stroke="#8aa8d8" stroke-width="1.300"/>
<path d="M6.500 6.500h5M6.500 9.500h3" stroke="#b0b8c8" stroke-width="1"/>
<circle cx="12" cy="12.500" r="3.300" fill="#4b8f3a" stroke="#356e28" stroke-width=".6"/><path d="M12 10.700v3.600M10.200 12.500h3.600" stroke="#fff" stroke-width="1.300"/></svg>
<div class="t" style="left:50.3px;top:539px;font-size:12.5px;letter-spacing:-0.06px;">Utilities</div>
<div class="b" style="left:4px;top:563.2px;width:5.5px;height:1.2px;background:#35b0e6;"></div>
<svg class="b" style="left:16px;top:555.5px" width="16" height="16" viewBox="0 0 16 16"><g transform="translate(0 1)"><path d="M2.600 0.800h5.300l1.900 2h5q.700 0 .700.700v8.300q0 .900-.900.900h-10.600q-.800 0-1.200-.700l-1.600-3.400q-.500-1.100.100-2.100z" fill="#e4f5ff" stroke="#2a9bec" stroke-width="1.100"/>
<path d="M0.900 6.800q.300-1 1.500-1h8.200q1.900 0 2.200 1.900l.300 3.300h-10l-2-3.200z" fill="#a4defc"/><path d="M0.900 6.800q.300-1 1.500-1h8.200q1.900 0 2.200 1.900l.300 2.800" fill="none" stroke="#1fa6ea" stroke-width="1.100"/>
<path d="M2.500 7.600h9" stroke="#e0f6ff" stroke-width="1"/><path d="M2.800 3.200h4.500" stroke="#a8e0fc" stroke-width="1"/>
<path d="M3.200 11.900h11" stroke="#1e90e4" stroke-width="1.700"/></g></svg>
<div class="t" style="left:34.3px;top:559px;font-size:12.5px;letter-spacing:0.02px;">Plánování</div>
<svg class="b" style="left:32px;top:577.0px" width="16" height="16" viewBox="0 0 16 16"><rect x="10.900" y="5" width="5" height="7.600" rx="1" fill="#2a5cb8" stroke="#163a88" stroke-width=".600"/><rect x="12.200" y="6.500" width="2.800" height="4.400" rx=".500" fill="#d8ecff"/>
<rect x="0.900" y="9" width="10.200" height="1" fill="#e89838"/><rect x="0.900" y="9.900" width="10.200" height="1.200" fill="#f8d278"/><rect x="0.900" y="11.100" width="10.500" height="1.200" fill="#6a1c22"/>
<circle cx="3.600" cy="13" r="1.300" fill="#2a2a2a"/><circle cx="6.600" cy="13" r="1.300" fill="#2a2a2a"/><circle cx="13.700" cy="13" r="1.300" fill="#2a2a2a"/></svg>
<div class="t" style="left:50.3px;top:579px;font-size:12.5px;">Výhled zakázek</div>
<svg class="b" style="left:32px;top:597.0px" width="16" height="16" viewBox="0 0 16 16"><path d="M2.300 13.700L9.500 6.500" stroke="#4a84dc" stroke-width="4.600" stroke-linecap="round"/><path d="M2.300 13.700L9.500 6.500" stroke="#9cc0f2" stroke-width="2.600" stroke-linecap="round"/>
<path d="M9 7.500c-1.500-2.500-.5-5.500 2.500-6.500l.3.300-2 2 .6 2.200 2.200.6 2-2 .4.300c-.6 3-3.500 4.500-6 3.100z" fill="#dcdfe4" stroke="#8a9098" stroke-width=".9"/></svg>
<div class="t" style="left:50.3px;top:599px;font-size:12.5px;letter-spacing:0.27px;">Výhled materiálu - zakázky</div>
<svg class="b" style="left:32px;top:617.0px" width="16" height="16" viewBox="0 0 16 16"><path d="M5.500 0.700h7.500v13.500h-7.500z" fill="#c4c6d4" stroke="#7e848c" stroke-width=".900"/><path d="M13 1.200v13" stroke="#6a7068" stroke-width="1.400"/><path d="M9.500 2v11.500" stroke="#dcdce8" stroke-width="1.600"/>
<rect x="0.600" y="1.500" width="8.600" height="10.800" rx="2" fill="#e9a11e" stroke="#d8900f" stroke-width=".800"/>
<path d="M2.300 4.200q2.500 1.600 5.200 0M2.300 7q2.500 1.600 5.200 0M2.300 9.800q2.500 1.600 5.200 0" fill="none" stroke="#fde08a" stroke-width="1.500" stroke-linecap="round"/>
<path d="M6.500 14.700h8" stroke="#3f7fe0" stroke-width="1"/><circle cx="6.500" cy="14.600" r="1.500" fill="#3f7fe0"/><circle cx="14.400" cy="14.600" r="1.500" fill="#3f7fe0"/><rect x="9.800" y="13" width="2" height="2.200" fill="#7a4a30"/></svg>
<div class="t" style="left:50.3px;top:619px;font-size:12.5px;letter-spacing:0.31px;">Výhled materiálu - příkazy</div>
<div class="b" style="left:0px;top:635.0px;width:216px;height:20px;background:#efefef;"></div>
<svg class="b" style="left:32px;top:637.0px" width="16" height="16" viewBox="0 0 16 16"><rect x="1.500" y="1.500" width="13" height="13" rx="1" fill="#fff" stroke="#5c8fe0" stroke-width="1"/>
<rect x="3" y="3" width="10" height="2.800" fill="#f59a40"/><path d="M3.500 7.500h3M3.500 9.500h3M3.500 11.500h2M8 7.500h2" stroke="#b4c6e8" stroke-width="1.200" stroke-dasharray="1.200 .8"/>
<path d="M5.500 13.500l8-8" stroke="#c87c28" stroke-width="4" stroke-linecap="round"/><path d="M5.500 13.500l8-8" stroke="#f5c27c" stroke-width="2.200" stroke-linecap="round"/><path d="M3.600 15.200l.8-2.800 2 2z" fill="#f0dcc0" stroke="#a87838" stroke-width=".5"/></svg>
<div class="t" style="left:50.3px;top:639px;font-size:12.5px;letter-spacing:0.07px;">Plánování výroby l.p.</div>
<svg class="b" style="left:32px;top:657.0px" width="16" height="16" viewBox="0 0 16 16"><ellipse cx="7.500" cy="1.800" rx="6.800" ry="1.500" fill="#d49c60" stroke="#a06a30" stroke-width=".8"/><ellipse cx="7.500" cy="14.200" rx="6.800" ry="1.500" fill="#d49c60" stroke="#a06a30" stroke-width=".8"/>
<path d="M2 3c0 3 4 4 4 5s-4 2-4 5h11c0-3-4-4-4-5s4-2 4-5z" fill="#eef4fb" stroke="#b8c6d6" stroke-width=".7"/>
<path d="M7.500 7.500h4v-2l4.300 3.500-4.300 3.500v-2h-4z" fill="#6a9a52" stroke="#3c5e2c" stroke-width=".9"/></svg>
<div class="t" style="left:50.3px;top:659px;font-size:12.5px;letter-spacing:0.13px;">Přehled výrobního plánu l.p.</div>
<svg class="b" style="left:32px;top:677.0px" width="16" height="16" viewBox="0 0 16 16"><rect x="1.500" y="1.500" width="13" height="13" rx="1" fill="#fff" stroke="#5c8fe0" stroke-width="1"/>
<rect x="3" y="3" width="10" height="2.800" fill="#f59a40"/><path d="M3.500 8h9M3.500 10h9M3.500 12h9" stroke="#b4c6e8" stroke-width="1.200" stroke-dasharray="1.400 .8"/>
<rect x="5.500" y="9" width="2.500" height="2.500" fill="#5a9040"/><rect x="10" y="7.500" width="2.500" height="2.500" fill="#5a9040"/></svg>
<div class="t" style="left:50.3px;top:679px;font-size:12.5px;letter-spacing:0.13px;">Kalendář pracovišť l.p.</div>
</div>
<div class="b" style="left:220px;top:178px;width:9px;height:694px;background:#e2e8ec;border-radius:4px;"></div>
<div class="b" style="left:220.5px;top:202px;width:8px;height:50px;background:#b8bcd2;border-radius:4px 4px 0 0;"></div>
<div class="b" style="left:220.5px;top:252px;width:8px;height:80px;background:#c8c8c8;"></div>
<div class="b" style="left:220.5px;top:332px;width:8px;height:68px;background:#c8d8de;"></div>
<div class="b" style="left:220.5px;top:400px;width:8px;height:80px;background:#d8d8d8;"></div>
<div class="b" style="left:220.5px;top:480px;width:8px;height:109px;background:#dce4e8;"></div>
<div class="b" style="left:220.5px;top:589px;width:8px;height:83px;background:#dadada;"></div>
<div class="b" style="left:220.5px;top:672px;width:8px;height:69px;background:#cddbe2;"></div>
<div class="b" style="left:220.5px;top:741px;width:8px;height:79px;background:#cecece;"></div>
<div class="b" style="left:220.5px;top:820px;width:8px;height:52px;background:#b4b8d0;border-radius:0 0 4px 4px;"></div>
<div class="b" style="left:239px;top:34px;width:1px;height:999px;background:#f4f4f7;"></div>
<div class="b" style="left:240px;top:35px;width:1416px;height:5px;background:#f1f1f6;"></div>
<div class="b" style="left:243px;top:41px;width:83px;height:26px;background:#f7fdff;border:1px solid #d9e4ea;border-bottom:none;border-radius:9px 9px 0 0;"></div>
<div class="t" style="left:254px;top:48px;font-size:12.5px;color:#25274d;letter-spacing:0.06px;">Dashboard</div>
<div class="b" style="left:328px;top:41px;width:131px;height:26px;background:#f7fdff;border:1px solid #d9e4ea;border-bottom:none;border-radius:9px 9px 0 0;"></div>
<svg class="b" style="left:334px;top:45px" width="16" height="16" viewBox="0 0 16 16"><rect x="10.900" y="5" width="5" height="7.600" rx="1" fill="#2a5cb8" stroke="#163a88" stroke-width=".600"/><rect x="12.200" y="6.500" width="2.800" height="4.400" rx=".500" fill="#d8ecff"/>
<rect x="0.900" y="9" width="10.200" height="1" fill="#e89838"/><rect x="0.900" y="9.900" width="10.200" height="1.200" fill="#f8d278"/><rect x="0.900" y="11.100" width="10.500" height="1.200" fill="#6a1c22"/>
<circle cx="3.600" cy="13" r="1.300" fill="#2a2a2a"/><circle cx="6.600" cy="13" r="1.300" fill="#2a2a2a"/><circle cx="13.700" cy="13" r="1.300" fill="#2a2a2a"/></svg>
<div class="t" style="left:356.2px;top:48px;font-size:12.5px;color:#25274d;letter-spacing:-0.32px;">Výhled zakázek</div>
<svg class="b" style="left:447.7px;top:46.500px" width="6" height="6"><path d="M0.500 0.500l5 5M5.500 0.500l-5 5" stroke="#2aa0e4" stroke-width="1.200"/></svg>
<div class="b" style="left:461px;top:41px;width:197px;height:26px;background:#f7fdff;border:1px solid #d9e4ea;border-bottom:none;border-radius:9px 9px 0 0;"></div>
<svg class="b" style="left:467px;top:45px" width="16" height="16" viewBox="0 0 16 16"><path d="M2.300 13.700L9.500 6.500" stroke="#4a84dc" stroke-width="4.600" stroke-linecap="round"/><path d="M2.300 13.700L9.500 6.500" stroke="#9cc0f2" stroke-width="2.600" stroke-linecap="round"/>
<path d="M9 7.500c-1.500-2.500-.5-5.500 2.500-6.500l.3.300-2 2 .6 2.200 2.200.6 2-2 .4.300c-.6 3-3.500 4.500-6 3.100z" fill="#dcdfe4" stroke="#8a9098" stroke-width=".9"/></svg>
<div class="t" style="left:489px;top:48px;font-size:12.5px;color:#25274d;letter-spacing:-0.01px;">Výhled materiálu - zakázky</div>
<svg class="b" style="left:646.7px;top:46.500px" width="6" height="6"><path d="M0.500 0.500l5 5M5.500 0.500l-5 5" stroke="#2aa0e4" stroke-width="1.200"/></svg>
<div class="b" style="left:661px;top:41px;width:192px;height:26px;background:#f7fdff;border:1px solid #d9e4ea;border-bottom:none;border-radius:9px 9px 0 0;"></div>
<svg class="b" style="left:667px;top:45px" width="16" height="16" viewBox="0 0 16 16"><path d="M5.500 0.700h7.500v13.500h-7.500z" fill="#c4c6d4" stroke="#7e848c" stroke-width=".900"/><path d="M13 1.200v13" stroke="#6a7068" stroke-width="1.400"/><path d="M9.500 2v11.500" stroke="#dcdce8" stroke-width="1.600"/>
<rect x="0.600" y="1.500" width="8.600" height="10.800" rx="2" fill="#e9a11e" stroke="#d8900f" stroke-width=".800"/>
<path d="M2.300 4.200q2.500 1.600 5.200 0M2.300 7q2.500 1.600 5.200 0M2.300 9.800q2.500 1.600 5.200 0" fill="none" stroke="#fde08a" stroke-width="1.500" stroke-linecap="round"/>
<path d="M6.500 14.700h8" stroke="#3f7fe0" stroke-width="1"/><circle cx="6.500" cy="14.600" r="1.500" fill="#3f7fe0"/><circle cx="14.400" cy="14.600" r="1.500" fill="#3f7fe0"/><rect x="9.800" y="13" width="2" height="2.200" fill="#7a4a30"/></svg>
<div class="t" style="left:687.2px;top:48px;font-size:12.5px;color:#25274d;letter-spacing:0.05px;">Výhled materiálu - příkazy</div>
<svg class="b" style="left:841.7px;top:46.500px" width="6" height="6"><path d="M0.500 0.500l5 5M5.500 0.500l-5 5" stroke="#2aa0e4" stroke-width="1.200"/></svg>
<div class="b" style="left:856px;top:41px;width:163px;height:27px;background:#f7fdff;border:1px solid #d9e4ea;border-bottom:none;border-radius:9px 9px 0 0;"></div>
<svg class="b" style="left:862px;top:45px" width="16" height="16" viewBox="0 0 16 16"><rect x="1.500" y="1.500" width="13" height="13" rx="1" fill="#fff" stroke="#5c8fe0" stroke-width="1"/>
<rect x="3" y="3" width="10" height="2.800" fill="#f59a40"/><path d="M3.500 7.500h3M3.500 9.500h3M3.500 11.500h2M8 7.500h2" stroke="#b4c6e8" stroke-width="1.200" stroke-dasharray="1.200 .8"/>
<path d="M5.500 13.500l8-8" stroke="#c87c28" stroke-width="4" stroke-linecap="round"/><path d="M5.500 13.500l8-8" stroke="#f5c27c" stroke-width="2.200" stroke-linecap="round"/><path d="M3.600 15.200l.8-2.800 2 2z" fill="#f0dcc0" stroke="#a87838" stroke-width=".5"/></svg>
<div class="t" style="left:882.4px;top:48px;font-size:12.5px;font-weight:700;color:#1d96e0;letter-spacing:-0.38px;">Plánování výroby l.p.</div>
<svg class="b" style="left:1007.7px;top:46.500px" width="6" height="6"><path d="M0.500 0.500l5 5M5.500 0.500l-5 5" stroke="#2aa0e4" stroke-width="1.200"/></svg>
<div class="b" style="left:240px;top:67px;width:1416px;height:30px;background:#f7fdff;border-top:1px solid #dde6ec;border-bottom:1px solid #dde6ec;"></div>
<div class="b" style="left:857px;top:67px;width:161px;height:1px;background:#f7fdff;"></div>
<div class="t" style="left:244.4px;top:76px;font-size:12.5px;letter-spacing:0.06px;">Od data:</div>
<div class="b" style="left:299px;top:71px;width:68px;height:22px;background:#fff;border:1px solid #b4b6cc;border-radius:4px 0 0 4px;"></div>
<div class="t" style="left:303.5px;top:77px;font-size:12px;letter-spacing:-0.36px;">20.02.2022</div>
<div class="b" style="left:366px;top:71px;width:18px;height:22px;background:#f2f2f2;border:1px solid #a9adb8;border-radius:0 3px 3px 0;"></div>
<svg class="b" style="left:367.5px;top:73.5px" width="16" height="16" viewBox="0 0 16 16"><rect x="2.500" y="1.500" width="11" height="12" rx="1" fill="#fff" stroke="#2a7be0" stroke-width="1.300"/><rect x="2.500" y="1.500" width="11" height="2.500" fill="#2a7be0"/>
<path d="M5 7h2M5 10h2M9 10h2" stroke="#d8e2f2" stroke-width="1.500"/><circle cx="11.300" cy="6.300" r="1.500" fill="#fff" stroke="#f08a3c" stroke-width="1"/></svg>
<div class="t" style="left:390.2px;top:76px;font-size:12.5px;letter-spacing:-0.24px;">Pracoviště:</div>
<div class="b" style="left:465px;top:71px;width:208px;height:22px;background:#fff;border:1px solid #b4b6cc;border-radius:4px 0 0 4px;"></div>
<div class="t" style="left:469.8px;top:78px;font-size:11.5px;letter-spacing:-0.6px;">LIS160C5 LIS160C5</div>
<div class="b" style="left:672px;top:71px;width:18px;height:22px;background:#f2f2f2;border:1px solid #a9adb8;border-radius:0 3px 3px 0;"></div>
<svg class="b" style="left:676px;top:79px" width="9" height="6"><path d="M1 1l3.500 3.500L8 1" stroke="#1d7fd8" stroke-width="1.800" fill="none"/></svg>
<svg class="b" style="left:697px;top:74px" width="16" height="16" viewBox="0 0 16 16"><path d="M1 8l5-4v2.500h9v3h-9V12z" fill="#9aa896" stroke="#5c6c58" stroke-width=".9"/></svg>
<svg class="b" style="left:720px;top:74px" width="16" height="16" viewBox="0 0 16 16"><path d="M15 8l-5-4v2.500H1v3h9V12z" fill="#9aa896" stroke="#5c6c58" stroke-width=".9"/></svg>
<svg class="b" style="left:745px;top:74px" width="16" height="16" viewBox="0 0 16 16"><path d="M12.200 10.800A5 5 0 1 1 10.500 3.800" fill="none" stroke="#6a78b4" stroke-width="3.400"/><path d="M12.200 10.800A5 5 0 1 1 10.500 3.800" fill="none" stroke="#a4b2e2" stroke-width="2"/><path d="M8 0.500l6.500 1.200-2.800 5.300z" fill="#8a98d0" stroke="#6a78b4" stroke-width=".6"/><path d="M9.500 7.500h2.500" stroke="#7a88c0" stroke-width="1.200"/></svg>
<div class="t" style="left:762.5px;top:76px;font-size:12.5px;letter-spacing:-0.29px;">Načíst</div>
<svg class="b" style="left:805px;top:74px" width="16" height="16" viewBox="0 0 16 16"><rect x="1.500" y="0.500" width="10" height="14" rx="1" fill="#e4e6ea" stroke="#6e747e" stroke-width="1"/><rect x="3" y="2" width="7" height="3" fill="#b4ccec" stroke="#7a8aa6" stroke-width=".6"/>
<path d="M3.500 7.500h1.500M6 7.500h1.500M8.500 7.500h1.500M3.500 10h1.500M6 10h1.500M3.500 12.500h1.500" stroke="#5a606a" stroke-width="1.400"/>
<path d="M6.500 14l8-8" stroke="#c87c28" stroke-width="3.600" stroke-linecap="round"/><path d="M6.500 14l8-8" stroke="#f5c27c" stroke-width="2" stroke-linecap="round"/><path d="M4.600 15.600l.8-2.800 2 2z" fill="#f0dcc0" stroke="#a87838" stroke-width=".5"/></svg>
<div class="t" style="left:823px;top:76px;font-size:12.5px;letter-spacing:-0.11px;">Přepočítat</div>
<svg class="b" style="left:887px;top:74px" width="16" height="16" viewBox="0 0 16 16"><path d="M5 3.500h9.500M5 8.500h9.500M5 13.500h9.500" stroke="#20242c" stroke-width="1.100"/><path d="M1.500 1.500v3M1 6.500h1.500v1.500h-1.500v1.500h1.500M1 11.500h1.500v3h-1.500M1 13h1.500" stroke="#4a88d8" stroke-width=".8" fill="none"/></svg>
<div class="t" style="left:905.7px;top:76px;font-size:12.5px;letter-spacing:-0.13px;">Detail</div>
<svg class="b" style="left:964px;top:74px" width="16" height="16" viewBox="0 0 16 16"><path d="M1.500 2.500q0-2 2-2h6q2 0 2 2v9q0 2-2 2h-6q-2 0-2-2z" fill="#e8eaee" stroke="#8a909a" stroke-width="1"/><path d="M3.500 3.500h6M3.500 6h6" stroke="#c0c4cc" stroke-width="1"/>
<rect x="6.500" y="7.500" width="9" height="8" rx="1" fill="#4a84dc" stroke="#2a5cb0" stroke-width="1"/><rect x="8.500" y="8" width="5" height="3" fill="#e8f0fc"/><rect x="9" y="12.500" width="4" height="3" fill="#c8d4e8"/></svg>
<div class="t" style="left:983.2px;top:76px;font-size:12.5px;letter-spacing:-0.57px;">Uložit</div>
<div class="b" style="left:1601px;top:76px;width:1px;height:12px;background:#a8c4dc;"></div>
<svg class="b" style="left:1610.800px;top:75.300px" width="14" height="14" viewBox="0 0 16 16"><circle cx="8" cy="8" r="7" fill="#7a9adc" stroke="#4a6eb8" stroke-width="1"/><circle cx="8" cy="8" r="5.800" fill="none" stroke="#d4e0f6" stroke-width="1"/><path d="M2.500 9.500a5.500 5.500 0 0 0 11 0z" fill="#6e8aa8" opacity=".8"/>
<path d="M6 6.300c0-1.300.9-2 2-2s2 .7 2 1.800c0 1.500-2 1.500-2 3.200" fill="none" stroke="#fff" stroke-width="1.500"/><circle cx="8" cy="11.600" r="1" fill="#fff"/></svg>
<div class="t" style="left:1628.8px;top:77px;font-size:11px;letter-spacing:-0.41px;">FAQ</div>
<div class="b" style="left:240px;top:97px;width:1416px;height:936px;background:#fff;"></div>
<div class="b" style="left:253px;top:101px;width:586px;height:10px;background:#f7f7f7;"></div>
<div class="t" style="left:253.7px;top:105px;font-size:15px;font-weight:700;color:#14213d;letter-spacing:0.1px;">Nezaplánované příkazy</div>
<div class="b" style="left:253px;top:129px;width:586px;height:891px;background:#fff;border:1px solid #e3e8ec;border-radius:5px;"></div>
<div class="b" style="left:254px;top:130px;width:573px;height:38px;background:#f7fdff;border-bottom:1px solid #d5dbe8;border-radius:4px 0 0 0;"></div>
<div class="b" style="left:827px;top:130px;width:11px;height:38px;background:#f5f5f5;border-bottom:1px solid #d5dbe8;border-radius:0 4px 0 0;"></div>
<div class="b" style="left:359px;top:139px;width:103px;height:21px;background:#e8f2fc;"></div>
<div class="b" style="left:358px;top:131px;width:1px;height:36px;background:#cdd4e2;"></div>
<div class="b" style="left:462px;top:131px;width:1px;height:36px;background:#e6e8f2;"></div>
<div class="b" style="left:566px;top:131px;width:1px;height:36px;background:#d5dbe8;"></div>
<div class="b" style="left:826px;top:131px;width:1px;height:36px;background:#d5dbe8;"></div>
<div class="t" style="left:261.5px;top:144px;font-size:11.5px;letter-spacing:-0.36px;">Příkaz</div>
<div class="t" style="left:385.9px;top:144px;font-size:11.5px;letter-spacing:0.54px;">Do data</div>
<svg class="b" style="left:434px;top:147px" width="8" height="5"><path d="M0 4.500h8L4 0z" fill="#4a8fdc"/></svg>
<div class="t" style="left:470px;top:136px;font-size:11.5px;letter-spacing:0.47px;">Čas (dny, hod,</div>
<div class="t" style="left:523.6px;top:150px;font-size:12.5px;letter-spacing:0.7px;">min)</div>
<div class="t" style="left:573.6px;top:144px;font-size:11.5px;letter-spacing:0.34px;">Produkty</div>
<div class="b" style="left:254px;top:168px;width:573px;height:21px;background:#fff;border-bottom:1px solid #e6ecf4;border-top:1px solid #fff;"></div>
<div class="t lk" style="left:261.5px;top:173px;font-size:11px;letter-spacing:0.31px;">3837</div>
<div class="t" style="left:408.8px;top:173px;font-size:11px;letter-spacing:-0.56px;">20.12.2021</div>
<div class="t" style="left:510.7px;top:173px;font-size:11px;letter-spacing:-0.03px;">2:02:24:25</div>
<div class="t" style="left:573.6px;top:173px;font-size:11.5px;letter-spacing:0.16px;">LICP5550145005 Internal Plateau</div>
<div class="b" style="left:254px;top:189px;width:573px;height:21px;background:#f7fdff;border-bottom:1px solid #e6ecf4;border-top:1px solid #fff;"></div>
<div class="t lk" style="left:261.5px;top:194px;font-size:11px;letter-spacing:-0.1px;">LP21000034</div>
<div class="t" style="left:408.8px;top:194px;font-size:11px;letter-spacing:-0.56px;">29.12.2021</div>
<div class="t" style="left:507.9px;top:194px;font-size:11px;letter-spacing:0.28px;">0:00:00:00</div>
<div class="b" style="left:254px;top:210px;width:574px;height:21px;border:1px dotted #25aee8;background:#fdefe1;"></div>
<div class="t lk" style="left:261.5px;top:215px;font-size:11px;letter-spacing:0.27px;">LP22000004</div>
<div class="t" style="left:410.8px;top:215px;font-size:10.5px;letter-spacing:-0.42px;">11.01.2022</div>
<div class="t" style="left:508.6px;top:215px;font-size:11px;letter-spacing:0.2px;">0:09:43:00</div>
<div class="t" style="left:573.6px;top:215px;font-size:11.5px;letter-spacing:0.21px;">156158530 Armrest retainer</div>
<svg class="b" style="left:852px;top:488px" width="26" height="26" viewBox="0 0 26 26"><rect x="1.900" y="0.800" width="23.200" height="23.200" rx="6.500" fill="#eef0f4" stroke="#3aa5e6" stroke-width="1.300"/><g transform="translate(0.500 -0.600)"><path d="M10 7v11.500l7-5.750z" fill="url(#gb)" stroke="#3a72d0" stroke-width=".6"/></g></svg>
<svg class="b" style="left:852px;top:532px" width="26" height="26" viewBox="0 0 26 26"><rect x="1.900" y="0.800" width="23.200" height="23.200" rx="6.500" fill="#eef0f4" stroke="#3aa5e6" stroke-width="1.300"/><g transform="translate(0.500 -0.600)"><path d="M8.500 7.500v11l6-5.500z" fill="url(#gb)" stroke="#3a72d0" stroke-width=".6"/><rect x="14.500" y="7.500" width="3" height="11" fill="url(#gb)" stroke="#3a72d0" stroke-width=".6"/></g></svg>
<svg class="b" style="left:852px;top:576px" width="26" height="26" viewBox="0 0 26 26"><rect x="1.900" y="0.800" width="23.200" height="23.200" rx="6.500" fill="#eef0f4" stroke="#3aa5e6" stroke-width="1.300"/><g transform="translate(0.500 -0.600)"><path d="M16 7.500v11l-7-5.500z" fill="url(#gbr)" stroke="#3a72d0" stroke-width=".6"/></g></svg>
<svg class="b" style="left:852px;top:620px" width="26" height="26" viewBox="0 0 26 26"><rect x="1.900" y="0.800" width="23.200" height="23.200" rx="6.500" fill="#eef0f4" stroke="#3aa5e6" stroke-width="1.300"/><g transform="translate(0.500 -0.600)"><path d="M17.500 7.500v11l-6-5.500z" fill="url(#gbr)" stroke="#3a72d0" stroke-width=".6"/><rect x="8.500" y="7.500" width="3" height="11" fill="url(#gbr)" stroke="#3a72d0" stroke-width=".6"/></g></svg>
<div class="b" style="left:892px;top:101px;width:751px;height:10px;background:#f7f7f7;"></div>
<div class="t" style="left:892px;top:105px;font-size:15px;font-weight:700;color:#14213d;letter-spacing:0.11px;">Zaplánované příkazy</div>
<div class="b" style="left:892px;top:129px;width:751px;height:891px;background:#fff;border:1px solid #e3e8ec;border-radius:5px;"></div>
<div class="b" style="left:893px;top:130px;width:737px;height:38px;background:#f7fdff;border-bottom:1px solid #d5dbe8;border-radius:4px 0 0 0;"></div>
<div class="b" style="left:1630px;top:130px;width:12px;height:38px;background:#f5f5f5;border-bottom:1px solid #d5dbe8;border-radius:0 4px 0 0;"></div>
<div class="b" style="left:991px;top:131px;width:1px;height:36px;background:#d5dbe8;"></div>
<div class="b" style="left:1089px;top:131px;width:1px;height:36px;background:#d5dbe8;"></div>
<div class="b" style="left:1187px;top:131px;width:1px;height:36px;background:#d5dbe8;"></div>
<div class="b" style="left:1285px;top:131px;width:1px;height:36px;background:#d5dbe8;"></div>
<div class="b" style="left:1359px;top:131px;width:1px;height:36px;background:#d5dbe8;"></div>
<div class="b" style="left:1457px;top:131px;width:1px;height:36px;background:#d5dbe8;"></div>
<div class="b" style="left:1531px;top:131px;width:1px;height:36px;background:#d5dbe8;"></div>
<div class="b" style="left:1629px;top:131px;width:1px;height:36px;background:#d5dbe8;"></div>
<div class="t" style="left:899.8px;top:144px;font-size:11.5px;letter-spacing:-0.34px;">Příkaz</div>
<div class="t" style="left:1027.9px;top:143px;font-size:12.0px;letter-spacing:0.41px;">Do data</div>
<div class="t" style="left:1117px;top:135px;font-size:12.0px;letter-spacing:0.4px;">Čas (dny,</div>
<div class="t" style="left:1117px;top:150px;font-size:12.0px;letter-spacing:0.46px;">hod, min)</div>
<div class="t" style="left:1227.4px;top:144px;font-size:11.5px;letter-spacing:0.31px;">Plán od</div>
<div class="t" style="left:1303.3px;top:144px;font-size:11.5px;letter-spacing:0.45px;">Čas od</div>
<div class="t" style="left:1399.8px;top:144px;font-size:11.5px;letter-spacing:0.36px;">Plán do</div>
<div class="t" style="left:1475.5px;top:144px;font-size:11.5px;letter-spacing:0.57px;">Čas do</div>
<div class="t" style="left:1538px;top:144px;font-size:11.5px;letter-spacing:0.33px;">Produkty</div>
<div class="b" style="left:893px;top:168px;width:738px;height:21px;background:#fff;border-bottom:1px solid #e6ecf4;border-top:1px solid #fff;"></div>
<div class="t lk" style="left:899.8px;top:173px;font-size:11px;letter-spacing:0.08px;">MP21000007</div>
<div class="t" style="left:1035.0px;top:173px;font-size:11px;letter-spacing:-0.48px;">07.12.2021</div>
<div class="t" style="left:1129.0px;top:173px;font-size:11px;letter-spacing:0.26px;">0:05:52:00</div>
<div class="t" style="left:1538px;top:173px;font-size:11.5px;letter-spacing:-0.42px;">36229081 Blen&hellip;</div>
<div class="b" style="left:893px;top:189px;width:738px;height:21px;background:#f7fdff;border-bottom:1px solid #e6ecf4;border-top:1px solid #fff;"></div>
<div class="t lk" style="left:899.8px;top:194px;font-size:11px;letter-spacing:0.23px;">LP22000003</div>
<div class="t" style="left:1031.0px;top:194px;font-size:11px;letter-spacing:-0.04px;">05.01.2022</div>
<div class="t" style="left:1133.0px;top:194px;font-size:11px;letter-spacing:-0.19px;">2:10:52:50</div>
<div class="t" style="left:1538px;top:194px;font-size:11.5px;letter-spacing:-0.03px;">2U452 Adapte&hellip;</div>
<div class="b" style="left:738px;top:235px;width:160px;height:40px;background:#eaf4fe;border:1px solid #7f9ecf;border-radius:3px;"></div>
<div class="t" style="left:743.4px;top:241px;font-size:11.5px;color:#555;letter-spacing:0.09px;">156158530 Armrest</div>
<div class="t" style="left:743.4px;top:258px;font-size:11.5px;color:#555;letter-spacing:0.59px;">retainer</div>
<div class="b" style="left:1656px;top:29px;width:22px;height:1001px;background:#efefef;border:1px solid #00a7de;box-shadow:inset 0 0 0 1px #fbeeec;"></div>
<div class="b" style="left:1678px;top:25px;width:2px;height:1008px;background:#f6f6f6;"></div>
<svg class="b" style="left:1662px;top:36px" width="10" height="9"><path d="M4.500 1L1 4.500 4.500 8M8.500 1L5 4.500 8.500 8" stroke="#1d96e0" stroke-width="1.200" fill="none"/></svg>
<div class="b" style="left:0px;top:1033px;width:1680px;height:17px;background:#f7fdff;"></div>
<div class="t" style="left:760.3px;top:1036px;font-size:9.5px;color:#25274d;letter-spacing:0.24px;">ALLEGRO Framework 2.97.502.1</div>
<div class="t" style="left:1669.5px;top:1035px;font-size:10px;color:#25274d;">x</div>
</body></html>
